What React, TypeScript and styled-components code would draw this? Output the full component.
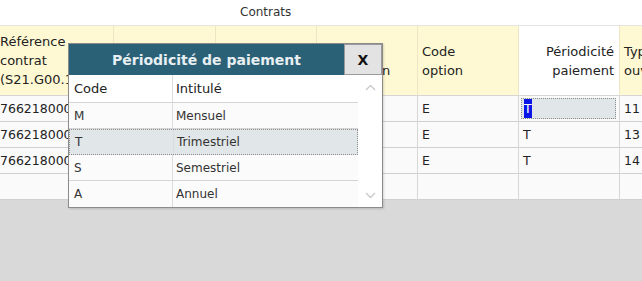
import styled, { createGlobalStyle } from 'styled-components'

const GlobalStyle = createGlobalStyle`
  html, body {
    margin: 0;
    padding: 0;
    height: 100%;
  }
  body {
    font-family: 'DejaVu Sans', Verdana, sans-serif;
    font-size: 13px;
    color: #222;
    background: #d9d9d9;
  }
  #root {
    height: 100%;
  }
`

type Col = {
  label: string[]
  width: number
  align?: 'left' | 'right'
  active?: boolean
}

const columns: Col[] = [
  { label: ['Référence', 'contrat', '(S21.G00.15.001)'], width: 114 },
  { label: ['Libellé', 'contrat'], width: 102 },
  { label: ['Date début', 'contrat'], width: 101 },
  { label: ['Code', 'population'], width: 101 },
  { label: ['Code', 'option'], width: 101 },
  { label: ['Périodicité', 'paiement'], width: 101, align: 'right', active: true },
  { label: ['Type', 'ouverture'], width: 60 },
]

const rows = [
  ['76621800015', '', '', '', 'E', 'T', '11'],
  ['76621800016', '', '', '', 'E', 'T', '13'],
  ['76621800017', '', '', '', 'E', 'T', '14'],
  ['', '', '', '', '', '', ''],
]

const periodicites = [
  { code: 'M', label: 'Mensuel' },
  { code: 'T', label: 'Trimestriel' },
  { code: 'S', label: 'Semestriel' },
  { code: 'A', label: 'Annuel' },
]

const Chevron = ({ up }: { up?: boolean }) => (
  <svg width='11' height='7' viewBox='0 0 11 7'>
    <path
      d={up ? 'M1 6 L5.5 1.5 L10 6' : 'M1 1 L5.5 5.5 L10 1'}
      fill='none'
      stroke='#c9c9c9'
      strokeWidth='1.3'
    />
  </svg>
)

const App = () => {
  const template = columns.map((c) => `${c.width}px`).join(' ')
  return (
    <>
      <GlobalStyle />
      <Page>
        <TitleBar>Contrats</TitleBar>
        <Grid style={{ gridTemplateColumns: template }}>
          {columns.map((c, i) => (
            <HeadCell key={c.label.join()} $align={c.align} $active={c.active} $first={i === 0}>
              <div>
                {c.label.map((l) => (
                  <div key={l}>{l}</div>
                ))}
              </div>
            </HeadCell>
          ))}
          {rows.map((r, ri) =>
            r.map((v, ci) => (
              <Cell key={`${ri}-${ci}`} $first={ci === 0}>
                {ri === 0 && ci === 5 ? (
                  <Focus>
                    <Selected>{v}</Selected>
                  </Focus>
                ) : (
                  v
                )}
              </Cell>
            ))
          )}
        </Grid>
        <Filler />

        <Dialog>
          <DialogHeader>
            <DialogTitle>Périodicité de paiement</DialogTitle>
            <CloseButton>X</CloseButton>
          </DialogHeader>
          <DialogBody>
            <List>
              <ListHead>Code</ListHead>
              <ListHead>Intitulé</ListHead>
              {periodicites.map((p) => (
                <ListRow key={p.code} $selected={p.code === 'T'}>
                  <ListCell>{p.code}</ListCell>
                  <ListCell>{p.label}</ListCell>
                </ListRow>
              ))}
            </List>
            <ScrollBar>
              <Chevron up />
              <Chevron />
            </ScrollBar>
          </DialogBody>
        </Dialog>
      </Page>
    </>
  )
}

export default App

const Page = styled.div`
  position: relative;
  height: 100%;
  display: flex;
  flex-direction: column;
  overflow: hidden;
`

const TitleBar = styled.div`
  height: 25px;
  flex: none;
  background: #fff;
  border-bottom: 1px solid #e4e4e4;
  padding-left: 240px;
  line-height: 24px;
  font-size: 12px;
  color: #333;
`

const Grid = styled.div`
  display: grid;
  grid-auto-rows: 26px;
  grid-template-rows: 70px;
  flex: none;
  background: #fafafa;
`

const HeadCell = styled.div<{ $align?: string; $active?: boolean; $first?: boolean }>`
  box-sizing: border-box;
  display: flex;
  align-items: center;
  justify-content: ${(p) => (p.$align === 'right' ? 'flex-end' : 'flex-start')};
  text-align: ${(p) => p.$align || 'left'};
  padding: 0 ${(p) => (p.$align === 'right' ? '5px' : '4px')} 0 ${(p) => (p.$first ? '0' : '4px')};
  background: ${(p) => (p.$active ? '#ffffff' : '#fff9d3')};
  border-right: 1px solid #ede6c4;
  border-bottom: 1px solid #d6d6d6;
  line-height: 19px;
  white-space: nowrap;
  overflow: hidden;
`

const Cell = styled.div<{ $first?: boolean }>`
  box-sizing: border-box;
  display: flex;
  align-items: center;
  padding: 0 4px 0 ${(p) => (p.$first ? '0' : '4px')};
  border-right: 1px solid #d6d6d6;
  border-bottom: 1px solid #d0d0d0;
  font-family: 'DejaVu Sans', Tahoma, sans-serif;
  font-size: 12.5px;
  white-space: nowrap;
  overflow: hidden;
`

const Focus = styled.div`
  box-sizing: border-box;
  align-self: stretch;
  flex: 1;
  margin: 2px -1px 2px -2px;
  padding-left: 2px;
  display: flex;
  align-items: center;
  background: #e1e6e8;
  border: 1px dotted #8c8c8c;
`

const Selected = styled.span`
  background: #0b16e6;
  color: #fff;
  padding: 1px 0;
  line-height: 17px;
`

const Filler = styled.div`
  flex: 1;
  background: #d9d9d9;
`

const Dialog = styled.div`
  position: absolute;
  left: 68px;
  top: 43px;
  width: 315px;
  box-sizing: border-box;
  border: 1px solid #8b8b8b;
  background: #fff;
  box-shadow: 1px 1px 2px rgba(0, 0, 0, 0.15);
`

const DialogHeader = styled.div`
  height: 31px;
  display: flex;
  align-items: stretch;
  background: #2b6177;
`

const DialogTitle = styled.div`
  flex: 1;
  display: flex;
  align-items: center;
  justify-content: center;
  color: #e8eff2;
  font-weight: bold;
  font-size: 14px;
`

const CloseButton = styled.button`
  width: 38px;
  margin: 0;
  padding: 0;
  border: 1px solid #9a9a9a;
  background: #e3e3e3;
  font-family: 'DejaVu Sans', Verdana, sans-serif;
  font-weight: bold;
  font-size: 14px;
  color: #111;
`

const DialogBody = styled.div`
  display: flex;
`

const List = styled.div`
  width: 289px;
  display: grid;
  grid-template-columns: 103px 1fr;
  grid-template-rows: 28px;
  grid-auto-rows: 26px;
`

const ListHead = styled.div`
  display: flex;
  align-items: center;
  padding-left: 5px;
  font-size: 13px;
  color: #222;
  border-bottom: 1px solid #d4d4d4;
  & + & {
    border-left: 1px solid #dcdcdc;
    padding-left: 3px;
  }
`

const ListRow = styled.div<{ $selected?: boolean }>`
  grid-column: 1 / -1;
  display: grid;
  grid-template-columns: 103px 1fr;
  box-sizing: border-box;
  background: ${(p) => (p.$selected ? '#e1e6e8' : '#fbfbfb')};
  border: ${(p) => (p.$selected ? '1px dotted #8c8c8c' : 'none')};
  border-bottom: ${(p) => (p.$selected ? '1px dotted #8c8c8c' : '1px solid #d4d4d4')};
  &:last-child {
    border-bottom: none;
  }
`

const ListCell = styled.div`
  display: flex;
  align-items: center;
  padding-left: 5px;
  font-size: 12px;
  color: #333;
  & + & {
    border-left: 1px solid #dcdcdc;
    padding-left: 3px;
  }
`

const ScrollBar = styled.div`
  flex: 1;
  display: flex;
  flex-direction: column;
  align-items: center;
  justify-content: space-between;
  padding: 9px 0 8px;
  background: #fff;
`
